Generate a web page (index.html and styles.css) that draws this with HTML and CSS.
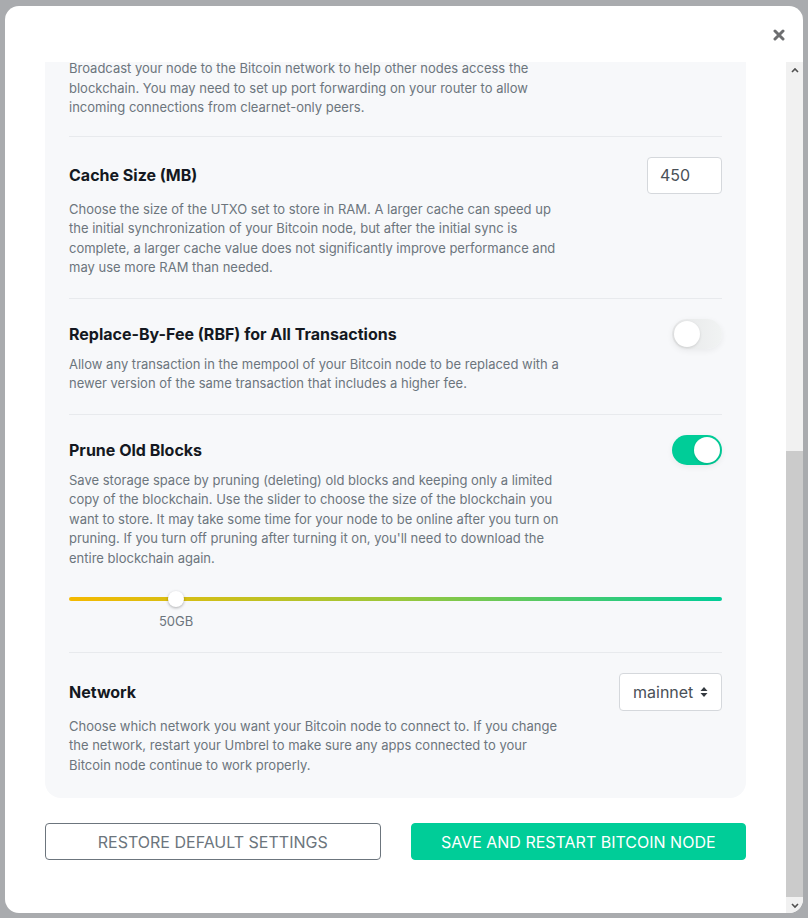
FILE: index.html
```html
<!DOCTYPE html>
<html lang="en">
<head>
<meta charset="utf-8">
<title>Bitcoin Node Settings</title>
<link rel="stylesheet" href="styles.css">
</head>
<body>
<div class="modal">
  <div class="modal-header">
    <button class="close" aria-label="Close">
      <svg width="12" height="12" viewBox="0 0 12 12"><path d="M2 2 L10 10 M10 2 L2 10" stroke="#6d6e70" stroke-width="3" stroke-linecap="round"/></svg>
    </button>
  </div>
  <div class="modal-main">
    <div class="modal-body">
      <div class="panel">
        <div class="setting first">
          <p class="desc">Broadcast your node to the Bitcoin network to help other nodes access the<br>blockchain. You may need to set up port forwarding on your router to allow<br>incoming connections from clearnet-only peers.</p>
        </div>
        <div class="setting">
          <div class="setting-row">
            <h3 class="title">Cache Size (MB)</h3>
            <input class="num-input" type="text" value="450">
          </div>
          <p class="desc">Choose the size of the UTXO set to store in RAM. A larger cache can speed up<br>the initial synchronization of your Bitcoin node, but after the initial sync is<br>complete, a larger cache value does not significantly improve performance and<br>may use more RAM than needed.</p>
        </div>
        <div class="setting">
          <div class="setting-row">
            <h3 class="title">Replace-By-Fee (RBF) for All Transactions</h3>
            <span class="toggle"><span class="knob"></span></span>
          </div>
          <p class="desc">Allow any transaction in the mempool of your Bitcoin node to be replaced with a<br>newer version of the same transaction that includes a higher fee.</p>
        </div>
        <div class="setting">
          <div class="setting-row">
            <h3 class="title">Prune Old Blocks</h3>
            <span class="toggle on"><span class="knob"></span></span>
          </div>
          <p class="desc">Save storage space by pruning (deleting) old blocks and keeping only a limited<br>copy of the blockchain. Use the slider to choose the size of the blockchain you<br>want to store. It may take some time for your node to be online after you turn on<br>pruning. If you turn off pruning after turning it on, you'll need to download the<br>entire blockchain again.</p>
          <div class="slider">
            <div class="slider-rail">
              <div class="slider-track"></div>
              <span class="slider-thumb" style="left: 16.4%"></span>
            </div>
            <div class="slider-label" style="margin-left: 16.4%">50GB</div>
          </div>
        </div>
        <div class="setting last">
          <div class="setting-row">
            <h3 class="title">Network</h3>
            <div class="select">mainnet
              <svg width="8" height="12" viewBox="0 0 8 12"><path d="M4 1 L7.5 5 L0.5 5 Z M4 11 L7.5 7 L0.5 7 Z" fill="#343a40"/></svg>
            </div>
          </div>
          <p class="desc">Choose which network you want your Bitcoin node to connect to. If you change<br>the network, restart your Umbrel to make sure any apps connected to your<br>Bitcoin node continue to work properly.</p>
        </div>
      </div>
      <div class="actions">
        <button class="btn btn-outline">RESTORE DEFAULT SETTINGS</button>
        <button class="btn btn-success">SAVE AND RESTART BITCOIN NODE</button>
      </div>
    </div>
    <div class="scrollbar">
      <div class="sb-btn"><svg width="8" height="6" viewBox="0 0 8 6"><path d="M1 5 L4 2 L7 5" stroke="#505050" stroke-width="1.6" fill="none"/></svg></div>
      <div class="sb-track"><div class="sb-thumb"></div></div>
      <div class="sb-btn"><svg width="8" height="6" viewBox="0 0 8 6"><path d="M1 1 L4 4 L7 1" stroke="#505050" stroke-width="1.6" fill="none"/></svg></div>
    </div>
  </div>
</div>
</body>
</html>
```

FILE: styles.css
```css
* { box-sizing: border-box; }

html, body {
  margin: 0;
  height: 918px;
  overflow: hidden;
}

body {
  background: #a9abae;
  font-family: "Inter", "Noto Sans", sans-serif;
  padding: 6px 5px 5px 5px;
}

.modal {
  height: 907px;
  background: #ffffff;
  border-radius: 14px;
  overflow: hidden;
  display: flex;
  flex-direction: column;
}

.modal-header {
  height: 56px;
  flex: none;
  display: flex;
  justify-content: flex-end;
  align-items: center;
  padding-right: 18px;
  padding-top: 2px;
}

.close {
  border: 0;
  background: transparent;
  padding: 0;
  width: 12px;
  height: 12px;
  display: flex;
  cursor: pointer;
}

.modal-main {
  flex: 1;
  display: flex;
  min-height: 0;
}

.modal-body {
  flex: 1;
  padding: 0 40px;
  overflow: hidden;
}

.panel {
  background: #f7f8fa;
  border-radius: 0 0 16px 16px;
  padding: 0 24px 3px;
}

.setting {
  padding: 20px 0;
  border-bottom: 1px solid #e8eaed;
}

.setting.first {
  padding-top: 0;
  padding-bottom: 18px;
}

.setting.first .desc {
  margin-top: -3px;
}

.setting.last {
  border-bottom: 0;
}

.setting-row {
  display: flex;
  justify-content: space-between;
  align-items: center;
}

.title {
  margin: 0;
  font-size: 16px;
  font-weight: 700;
  color: #141821;
  line-height: 22px;
}

.desc {
  margin: 6px 0 0;
  font-size: 13px;
  line-height: 19.5px;
  color: #6c757d;
  white-space: nowrap;
}

.num-input {
  width: 75px;
  height: 37px;
  border: 1px solid #d5d8dc;
  border-radius: 4px;
  background: #fff;
  font-family: inherit;
  font-size: 16px;
  color: #495057;
  padding: 0 12px;
  outline: none;
}

.toggle {
  width: 50px;
  height: 30px;
  border-radius: 15px;
  background: linear-gradient(90deg, #e6e7e8, #f1f3f3);
  display: flex;
  align-items: center;
  padding: 0 2px;
  box-shadow: 0 2px 6px rgba(0, 0, 0, 0.06);
}

.toggle .knob {
  width: 26px;
  height: 26px;
  border-radius: 50%;
  background: #fff;
  box-shadow: 0 1px 3px rgba(0, 0, 0, 0.12);
}

.toggle.on {
  background: #00cd98;
  justify-content: flex-end;
}

.slider {
  margin-top: 23px;
}

.slider-rail {
  position: relative;
  height: 16px;
  display: flex;
  align-items: center;
}

.slider-track {
  flex: 1;
  height: 4px;
  border-radius: 2px;
  background: linear-gradient(90deg, #f5b900 0%, #9cc73a 50%, #00cd98 100%);
}

.slider-thumb {
  position: absolute;
  top: 0;
  width: 16px;
  height: 16px;
  margin-left: -8px;
  border-radius: 50%;
  background: #fff;
  box-shadow: 0 1px 3px rgba(0, 0, 0, 0.3);
}

.slider-label {
  display: inline-block;
  transform: translateX(-50%);
  margin-top: 5px;
  font-size: 13px;
  line-height: 19.5px;
  color: #6c757d;
}

.select {
  width: 103px;
  height: 38px;
  border: 1px solid #d5d8dc;
  border-radius: 4px;
  background: #fff;
  display: flex;
  align-items: center;
  justify-content: space-between;
  padding: 0 13px 0 13px;
  font-size: 16px;
  color: #495057;
}

.actions {
  display: grid;
  grid-template-columns: 1fr 1fr;
  gap: 30px;
  margin-top: 25px;
}

.btn {
  height: 37px;
  border-radius: 4px;
  font-family: inherit;
  font-size: 16px;
  font-weight: 400;
  padding: 0;
  cursor: pointer;
}

.btn-outline {
  background: #fff;
  border: 1px solid #6c757d;
  color: #6c757d;
}

.btn-success {
  background: #00cd98;
  border: 1px solid #00cd98;
  color: #fff;
}

.scrollbar {
  width: 17px;
  flex: none;
  display: flex;
  flex-direction: column;
  background: #f1f1f1;
}

.sb-btn {
  height: 15px;
  display: flex;
  align-items: center;
  justify-content: center;
}

.sb-track {
  flex: 1;
  display: flex;
  flex-direction: column;
}

.sb-thumb {
  margin-top: 374px;
  height: 446px;
  background: #cbcbcb;
}
```
